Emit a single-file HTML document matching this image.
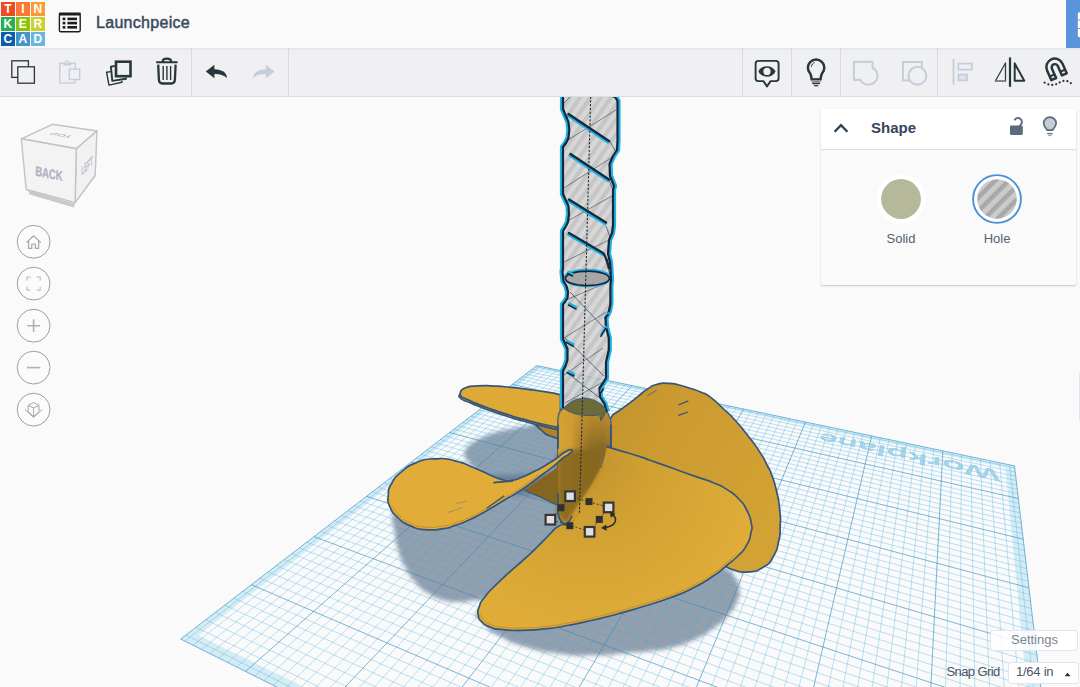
<!DOCTYPE html>
<html><head><meta charset="utf-8"><title>Launchpeice</title>
<style>
html,body{margin:0;padding:0;}
body{width:1080px;height:687px;overflow:hidden;background:#fafafa;font-family:"Liberation Sans",sans-serif;position:relative;color:#3b4a5e}
#topbar{position:absolute;left:0;top:0;width:1080px;height:48px;background:#fafafa}
#toolbar{position:absolute;left:0;top:48px;width:1080px;height:48px;background:#f0f0f3;border-bottom:1px solid #d9dee6;box-sizing:content-box;
 background-image:linear-gradient(#dde1e9 0,#eceef2 2px,#f0f0f3 4px)}
.sep{position:absolute;top:48px;width:1px;height:48px;background:#d5dae3}
#title{position:absolute;left:96px;top:13.5px;font-size:16px;font-weight:normal;color:#3b4a5e;-webkit-text-stroke:0.5px #3b4a5e;letter-spacing:0.3px}
.logo{position:absolute;left:1px;top:2px;width:44px;height:44px}
.logo div{position:absolute;width:13.7px;height:13.7px;color:#fff;font-weight:bold;font-size:12px;line-height:14.4px;text-align:center}
#bluebtn{position:absolute;left:1066px;top:0;width:14px;height:48px;background:#5b94da}
.ib{position:absolute}
#panel{position:absolute;left:821px;top:109px;width:255px;height:176px;background:#fafafa;box-shadow:0 1px 2px rgba(80,100,130,.35);border-radius:2px}
#panel .hd{position:absolute;left:0;top:0;width:255px;height:40px;background:#fff;border-bottom:1px solid #d9dee6}
#panel .ttl{position:absolute;left:50px;top:10px;font-size:15px;font-weight:bold;color:#35455a}
.lbl{position:absolute;font-size:13px;color:#566173;text-align:center;width:60px}
#settings{position:absolute;left:990px;top:630px;width:88px;height:21px;background:rgba(255,255,255,.85);border:1px solid #e2e5ea;border-radius:3px;font-size:13px;color:#7b8492;line-height:20px;box-sizing:border-box}
#settings span{position:absolute;left:20px;top:-1px}
#snap{position:absolute;left:946.5px;top:664px;font-size:13px;color:#4a5567;letter-spacing:-0.6px}
#snapbox{position:absolute;left:1008px;top:662px;width:70.5px;height:21.5px;background:#fff;border:1px solid #e2e5ea;border-radius:3px;box-sizing:border-box;font-size:13px;color:#4a5567}
#snapbox span{position:absolute;left:7px;top:1px;letter-spacing:-0.25px}
</style></head>
<body>
<svg id="scene" width="1080" height="687" viewBox="0 0 1080 687" style="position:absolute;left:0;top:0">
<defs><filter id="bl" x="-20%" y="-20%" width="140%" height="140%"><feGaussianBlur stdDeviation="2.1"/></filter><filter id="bl1" x="-20%" y="-20%" width="140%" height="140%"><feGaussianBlur stdDeviation="1.2"/></filter><filter id="bl2" x="-20%" y="-20%" width="140%" height="140%"><feGaussianBlur stdDeviation="4"/></filter><pattern id="st" width="8.4" height="8.4" patternUnits="userSpaceOnUse" patternTransform="rotate(-55)"><rect width="8.4" height="8.4" fill="#cfcfcf"/><rect width="8.4" height="4" fill="#b9b9b9"/></pattern><linearGradient id="hubg" x1="0" x2="1" y1="0" y2="0"><stop offset="0" stop-color="#dba535"/><stop offset="0.25" stop-color="#d09b31"/><stop offset="0.45" stop-color="#a57d29"/><stop offset="0.62" stop-color="#8f6e26"/><stop offset="0.85" stop-color="#8a6a25"/><stop offset="1" stop-color="#9a7628"/></linearGradient><linearGradient id="hubl" x1="0" x2="1" y1="0" y2="0"><stop offset="0" stop-color="#80611f"/><stop offset="0.35" stop-color="#8d6b23"/><stop offset="0.7" stop-color="#8a6924"/><stop offset="1" stop-color="#a17b2a"/></linearGradient><linearGradient id="hubt" gradientUnits="userSpaceOnUse" x1="0" x2="0" y1="398" y2="446"><stop offset="0" stop-color="#d6a235" stop-opacity="0.75"/><stop offset="0.5" stop-color="#cf9c33" stop-opacity="0.5"/><stop offset="1" stop-color="#cf9c33" stop-opacity="0"/></linearGradient><linearGradient id="hubv" x1="0" x2="0" y1="0" y2="1"><stop offset="0" stop-color="#8a6922" stop-opacity="0"/><stop offset="1" stop-color="#8a6922" stop-opacity="1"/></linearGradient><linearGradient id="b3g" x1="0" x2="1" y1="0" y2="0.6"><stop offset="0" stop-color="#c2932e"/><stop offset="0.35" stop-color="#cb9b31"/><stop offset="1" stop-color="#d3a234"/></linearGradient><radialGradient id="b4g" gradientUnits="userSpaceOnUse" cx="590" cy="465" r="170"><stop offset="0" stop-color="#c2942e"/><stop offset="0.3" stop-color="#cf9f32"/><stop offset="0.7" stop-color="#d8a736"/><stop offset="1" stop-color="#dfac38"/></radialGradient></defs><polygon points="180.7,639.0 536.8,365.6 1014.5,465.9 1088.9,1093.1" fill="#ffffff" fill-opacity="0.12"/>
<path d="M180.7,639.0 L536.8,365.6 L1014.5,465.9 L1088.9,1093.1Z M198.4,635.3 L539.4,369.0 L1005.4,467.8 L1062.7,1058.6Z" fill="#bfe3f0" fill-opacity="0.62" fill-rule="evenodd"/>
<g filter="url(#bl)">
<path d="M464.5,456.0 C464.3,452.7 463.4,453.5 466.2,449.0 C469.0,444.5 467.4,446.5 473.0,442.6 C478.6,438.7 475.2,440.7 483.0,437.2 C490.8,433.7 486.9,434.9 496.5,432.2 C506.1,429.5 502.2,430.9 511.7,429.0 C521.2,427.1 513.9,427.9 525.0,426.6 C536.1,425.3 530.0,421.9 545.0,425.0 C560.0,428.1 560.0,421.0 570.0,436.0 C580.0,451.0 578.3,452.0 575.0,470.0 C571.7,488.0 575.0,481.7 560.0,490.0 C545.0,498.3 550.0,495.0 530.0,495.0 C510.0,495.0 516.1,496.7 500.0,490.0 C483.9,483.3 491.1,483.0 481.7,475.0 C472.3,467.0 476.7,471.3 471.7,466.0 C466.7,460.7 469.1,462.3 466.7,459.0 C464.3,455.7 464.7,459.3 464.5,456.0Z" fill="#5b6b83" fill-opacity="0.64"/>
<path d="M393.0,512.0 C391.3,524.8 393.2,520.6 395.0,533.3 C396.8,546.0 395.0,538.9 398.3,550.0 C401.6,561.1 399.4,556.1 405.0,566.7 C410.6,577.3 407.2,572.8 415.0,581.7 C422.8,590.6 418.9,587.2 428.3,593.3 C437.7,599.4 433.3,597.2 443.3,600.0 C453.3,602.8 448.3,601.5 458.3,601.7 C468.3,601.9 465.1,601.6 473.3,600.5 C481.5,599.4 474.1,602.0 483.0,598.5 C491.9,595.0 481.0,606.2 500.0,590.0 C519.0,573.8 516.7,576.7 540.0,550.0 C563.3,523.3 563.3,533.3 570.0,510.0 C576.7,486.7 583.3,491.7 560.0,480.0 C536.7,468.3 543.3,475.0 500.0,475.0 C456.7,475.0 463.3,473.3 430.0,480.0 C396.7,486.7 412.3,484.3 400.0,495.0 C387.7,505.7 394.7,499.2 393.0,512.0Z" fill="#5b6b83" fill-opacity="0.64"/>
<path d="M481.0,610.0 C469.3,616.5 478.1,615.5 485.0,624.5 C491.9,633.5 487.8,629.5 501.7,637.0 C515.6,644.5 507.3,641.4 526.7,647.0 C546.1,652.6 537.8,650.9 560.0,653.7 C582.2,656.5 571.1,655.5 593.3,655.3 C615.5,655.1 607.8,654.4 626.7,653.0 C645.6,651.6 635.6,652.7 650.0,651.0 C664.4,649.3 655.6,651.7 670.0,648.0 C684.4,644.3 678.9,646.5 693.3,640.0 C707.7,633.5 701.6,636.8 713.3,628.5 C725.0,620.2 720.4,624.0 728.3,615.0 C736.2,606.0 733.4,610.4 737.0,601.5 C740.6,592.6 740.0,596.5 739.2,588.3 C738.4,580.1 738.9,583.4 734.5,577.0 C730.1,570.6 737.5,574.7 726.0,569.0 C714.5,563.3 742.0,553.0 700.0,560.0 C658.0,567.0 660.0,575.0 600.0,590.0 C540.0,605.0 559.7,598.3 520.0,605.0 C480.3,611.7 492.7,603.5 481.0,610.0Z" fill="#5b6b83" fill-opacity="0.64"/>
</g>
<path d="M184.7,641.1 L539.6,366.2 M185.8,635.1 L1087.5,1081.1 M193.1,645.2 L545.5,367.4 M195.9,627.3 L1084.7,1057.6 M201.5,649.5 L551.4,368.6 M205.7,619.8 L1082.0,1035.2 M210.1,653.7 L557.3,369.9 M215.3,612.4 L1079.5,1013.8 M218.7,658.1 L563.3,371.1 M224.7,605.2 L1077.0,993.2 M227.5,662.5 L569.3,372.4 M233.8,598.2 L1074.7,973.5 M236.5,666.9 L575.4,373.7 M242.7,591.4 L1072.4,954.6 M254.7,676.1 L587.7,376.2 M259.8,578.2 L1068.2,919.0 M264.0,680.7 L593.9,377.6 M268.1,571.9 L1066.2,902.2 M273.5,685.4 L600.2,378.9 M276.2,565.7 L1064.3,886.0 M283.1,690.2 L606.5,380.2 M284.1,559.6 L1062.5,870.5 M292.8,695.1 L612.8,381.5 M291.8,553.7 L1060.7,855.5 M302.7,700.1 L619.2,382.9 M299.4,547.9 L1059.0,841.0 M312.8,705.1 L625.7,384.2 M306.8,542.2 L1057.3,827.0 M333.3,715.3 L638.8,387.0 M321.0,531.2 L1054.2,800.5 M343.8,720.6 L645.4,388.4 M327.9,525.9 L1052.7,787.9 M354.5,725.9 L652.0,389.8 M334.7,520.7 L1051.2,775.7 M365.3,731.4 L658.8,391.2 M341.3,515.6 L1049.8,763.9 M376.3,736.9 L665.5,392.6 M347.8,510.7 L1048.5,752.4 M387.5,742.5 L672.4,394.0 M354.2,505.8 L1047.1,741.4 M398.9,748.1 L679.3,395.5 M360.4,501.0 L1045.9,730.6 M422.2,759.8 L693.2,398.4 M372.4,491.7 L1043.4,710.1 M434.2,765.8 L700.3,399.9 M378.3,487.3 L1042.3,700.3 M446.3,771.8 L707.4,401.4 M384.0,482.8 L1041.1,690.7 M458.6,778.0 L714.5,402.9 M389.7,478.5 L1040.0,681.5 M471.2,784.3 L721.8,404.4 M395.2,474.3 L1039.0,672.5 M484.0,790.7 L729.1,405.9 M400.6,470.1 L1037.9,663.7 M497.0,797.2 L736.4,407.5 M405.9,466.1 L1036.9,655.2 M523.6,810.5 L751.3,410.6 M416.2,458.1 L1035.0,638.8 M537.3,817.3 L758.9,412.2 M421.2,454.3 L1034.1,631.0 M551.3,824.3 L766.5,413.8 M426.2,450.5 L1033.1,623.3 M565.4,831.4 L774.2,415.4 M431.0,446.8 L1032.3,615.9 M579.9,838.6 L781.9,417.0 M435.8,443.1 L1031.4,608.6 M594.6,846.0 L789.7,418.7 M440.4,439.5 L1030.6,601.5 M609.6,853.5 L797.6,420.3 M445.0,436.0 L1029.7,594.6 M640.4,868.9 L813.5,423.7 M454.0,429.1 L1028.2,581.2 M656.2,876.8 L821.6,425.4 M458.3,425.8 L1027.4,574.8 M672.4,884.9 L829.8,427.1 M462.6,422.5 L1026.6,568.5 M688.9,893.1 L838.0,428.8 M466.8,419.3 L1025.9,562.4 M705.6,901.5 L846.3,430.6 M471.0,416.1 L1025.2,556.4 M722.8,910.1 L854.7,432.3 M475.0,413.0 L1024.5,550.5 M740.2,918.8 L863.1,434.1 M479.0,409.9 L1023.8,544.8 M776.2,936.8 L880.3,437.7 M486.9,403.9 L1022.5,533.7 M794.8,946.1 L889.0,439.5 M490.7,400.9 L1021.9,528.4 M813.7,955.6 L897.7,441.4 M494.4,398.1 L1021.3,523.1 M833.1,965.2 L906.6,443.2 M498.1,395.2 L1020.6,518.0 M852.9,975.1 L915.5,445.1 M501.8,392.4 L1020.0,512.9 M873.0,985.2 L924.5,447.0 M505.3,389.7 L1019.5,508.0 M893.7,995.5 L933.6,448.9 M508.9,387.0 L1018.9,503.2 M936.3,1016.8 L952.1,452.8 M515.8,381.7 L1017.8,493.8 M958.3,1027.8 L961.4,454.7 M519.1,379.1 L1017.2,489.3 M980.9,1039.1 L970.9,456.7 M522.4,376.6 L1016.7,484.8 M1003.9,1050.6 L980.4,458.7 M525.7,374.0 L1016.2,480.5 M1027.5,1062.4 L990.0,460.7 M528.9,371.6 L1015.7,476.2 M1051.7,1074.5 L999.7,462.8 M532.1,369.1 L1015.2,472.0 M1076.4,1086.9 L1009.6,464.8 M535.2,366.7 L1014.7,467.9" stroke="#38abdf" stroke-opacity="0.42" stroke-width="0.8" fill="none"/>
<path d="M245.5,671.5 L581.5,375.0 M251.4,584.7 L1070.3,936.4 M322.9,710.2 L632.2,385.6 M314.0,536.6 L1055.7,813.5 M410.5,753.9 L686.2,396.9 M366.5,496.3 L1044.6,720.2 M510.2,803.8 L743.8,409.0 M411.1,462.0 L1035.9,646.9 M624.8,861.1 L805.5,422.0 M449.5,432.5 L1028.9,587.8 M758.1,927.7 L871.7,435.9 M483.0,406.9 L1023.2,539.2 M914.7,1006.1 L942.8,450.8 M512.3,384.3 L1018.3,498.5 M180.7,639.0 L536.8,365.6 M180.7,639.0 L1088.9,1093.1 M1088.9,1093.1 L1014.5,465.9 M536.8,365.6 L1014.5,465.9" stroke="#2b8cc4" stroke-opacity="0.62" stroke-width="1" fill="none"/>
<path d="M534.4,424 L558.5,429.8 L558.5,439 L546,434.4Z" fill="#b0832a" stroke="#35567a" stroke-width="1.7" stroke-linejoin="round"/>
<path d="M460.0,393.9 C460.3,395.5 456.9,395.4 461.0,398.6 C465.1,401.8 462.9,399.7 472.2,403.6 C481.5,407.5 477.8,406.1 488.9,410.2 C500.0,414.3 494.5,412.3 505.6,415.8 C516.7,419.3 511.1,417.7 522.2,420.8 C533.3,423.9 527.4,422.4 538.9,425.2 C550.4,428.0 549.5,427.6 556.7,429.2 C563.9,430.8 559.2,429.7 560.5,430.0 L560.5,400Z" fill="#c5962f" stroke="#35567a" stroke-width="1.7" stroke-linejoin="round"/>
<path d="M460.0,393.9 C461.5,392.0 458.5,391.0 464.4,388.3 C470.3,385.6 467.8,386.6 477.8,385.9 C487.8,385.2 483.3,385.6 494.4,386.1 C505.5,386.6 500.0,386.3 511.1,387.4 C522.2,388.5 516.7,388.0 527.8,389.4 C538.9,390.8 534.0,390.0 544.4,391.7 C554.8,393.4 553.5,393.0 558.9,394.4 C564.3,395.8 560.0,395.5 560.5,396.0 L560.5,428.0 C559.2,427.7 563.9,428.8 556.7,427.2 C549.5,425.6 550.4,426.1 538.9,423.3 C527.4,420.5 533.3,422.0 522.2,418.9 C511.1,415.8 516.7,417.4 505.6,413.9 C494.5,410.4 500.0,412.4 488.9,408.3 C477.8,404.2 481.5,405.6 472.2,401.7 C462.9,397.8 464.8,398.4 461.1,396.7Z" fill="#dfa936" stroke="#35567a" stroke-width="1.7" stroke-linejoin="round"/>
<path d="M606.0,430.0 C607.7,425.8 607.3,423.5 611.2,417.4 C615.1,411.3 612.3,416.0 617.8,411.7 C623.3,407.4 621.1,409.4 627.8,404.4 C634.5,399.4 631.1,401.9 637.8,396.7 C644.5,391.5 641.5,393.0 647.8,388.9 C654.1,384.8 650.0,386.4 656.7,384.5 C663.4,382.6 660.4,383.1 667.8,383.3 C675.2,383.5 671.5,383.3 678.9,385.0 C686.3,386.7 682.6,385.9 690.0,388.3 C697.4,390.7 694.4,389.3 701.1,392.2 C707.8,395.1 702.9,391.6 710.0,396.9 C717.1,402.2 714.0,400.0 722.5,408.0 C731.0,416.0 726.8,411.2 735.5,420.8 C744.2,430.4 740.5,426.2 748.7,436.7 C756.9,447.2 753.7,442.6 760.0,452.4 C766.3,462.2 763.6,458.5 767.5,466.0 C771.4,473.5 768.6,466.4 771.7,475.0 C774.8,483.6 774.0,480.0 776.7,491.7 C779.4,503.4 778.5,498.6 779.7,510.0 C780.9,521.4 780.6,515.5 780.2,526.0 C779.8,536.5 781.0,531.2 778.6,541.5 C776.2,551.8 778.2,548.4 773.0,557.0 C767.8,565.6 771.3,562.3 763.0,567.3 C754.7,572.3 757.9,571.0 748.2,571.9 C738.5,572.8 741.8,572.0 734.0,570.0 C726.2,568.0 727.9,567.3 724.9,566.0 L700,540 L640,470 L606,447Z" fill="url(#b3g)" stroke="#35567a" stroke-width="1.7" stroke-linejoin="round"/>
<path d="M558,470 L558,421 C558.3,414 560,410.5 562.5,409.4 C566,404.6 572,400.3 577.3,398.8 C581,397.8 586,397.8 590.4,398.8 C596,400.3 601,403.8 602.6,406.2 C606,410 609.5,416 610.5,420.4 C611,424 611,427 611,430 L610.8,470 Z" fill="url(#hubg)" stroke="#35567a" stroke-width="1.7" stroke-linejoin="round"/>
<path d="M558,470 L558,421 C558.3,414 560,410.5 562.5,409.4 C566,404.6 572,400.3 577.3,398.8 C581,397.8 586,397.8 590.4,398.8 C596,400.3 601,403.8 602.6,406.2 C606,410 609.5,416 610.5,420.4 C611,424 611,427 611,430 L610.8,470 Z" fill="url(#hubt)"/>
<path d="M606.7,446.7 C611.1,448.0 608.9,447.3 620.0,450.6 C631.1,453.9 630.0,453.4 640.0,456.6 C650.0,459.8 638.9,456.2 650.0,460.2 C661.1,464.2 657.7,462.9 673.3,468.5 C688.9,474.1 683.4,472.2 696.7,476.9 C710.0,481.6 703.3,478.5 713.3,482.7 C723.3,486.9 718.4,484.1 726.7,489.4 C735.0,494.7 731.6,491.6 738.3,498.5 C745.0,505.4 742.4,501.7 746.7,510.0 C751.0,518.3 749.9,515.5 751.3,523.3 C752.7,531.1 752.3,526.1 750.8,533.3 C749.3,540.5 750.9,537.6 746.7,545.0 C742.5,552.4 745.0,548.7 738.3,555.5 C731.6,562.3 735.0,558.7 726.7,565.5 C718.4,572.3 724.5,568.5 713.3,576.0 C702.1,583.5 708.1,580.5 693.0,588.0 C677.9,595.5 685.7,592.0 668.0,598.5 C650.3,605.0 657.1,602.3 640.0,607.5 C622.9,612.7 632.3,610.0 616.7,614.2 C601.1,618.4 608.9,616.4 593.3,620.0 C577.7,623.6 585.5,622.1 570.0,625.0 C554.5,627.9 562.3,626.9 546.7,628.7 C531.1,630.5 537.8,630.0 523.3,630.3 C508.8,630.6 514.4,630.8 503.3,629.7 C492.2,628.6 497.2,629.7 490.0,627.0 C482.8,624.3 485.6,625.7 481.7,621.7 C477.8,617.7 479.1,620.0 478.3,615.0 C477.5,610.0 477.0,612.8 479.2,606.7 C481.4,600.6 479.2,604.2 485.0,596.7 C490.8,589.2 488.4,592.5 496.7,584.2 C505.0,575.9 501.1,579.8 510.0,571.7 C518.9,563.6 514.4,568.1 523.3,560.0 C532.2,551.9 528.1,555.8 536.7,547.5 C545.3,539.2 541.9,542.0 549.0,535.0 C556.1,528.0 552.3,530.0 558.0,526.5 C563.7,523.0 563.3,525.2 566.0,524.6 L606.7,446.7Z" fill="url(#b4g)"/>
<path d="M558.0,444.0 L558.0,513.0 L559.5,519.0 L562.5,523.0 L566.0,524.6 L569.5,521.0 L572.5,515.0 L580.5,502.1 L590.1,487.7 L599.7,470.0 L604.6,455.6 L607.0,447.0 L610.8,444.0 Z" fill="url(#hubg)"/>
<path d="M557.0,455.0 L566.0,451.0 L580.0,449.0 L596.0,449.0 L606.0,450.0 L603.5,457.0 L598.5,470.5 L589.0,488.0 L579.5,502.5 L571.8,516.0 L566.0,524.6 L557.0,514.0" fill="#86661f" fill-opacity="0.9" filter="url(#bl)"/>
<path d="M604.6,455.6 L599.7,470 L590.1,487.7 L580.5,502.1 L572.5,515 L569.5,521 L575,521 L612,447Z" fill="#c8992f" filter="url(#bl1)"/>
<path d="M480.6,613.0 C481.6,615.2 480.0,615.7 483.5,619.6 C487.0,623.5 484.3,622.0 491.0,624.6 C497.7,627.2 492.7,626.2 503.5,627.3 C514.3,628.4 509.0,628.2 523.3,627.9 C537.6,627.6 531.1,628.0 546.5,626.3 C561.9,624.6 554.2,625.6 569.6,622.7 C585.0,619.8 577.3,621.3 592.8,617.7 C608.3,614.1 600.5,616.0 616.0,611.9 C631.5,607.8 622.2,610.5 639.2,605.3 C656.2,600.1 649.5,602.8 667.0,596.4 C684.5,590.0 676.8,593.4 691.8,586.0 C706.8,578.6 700.8,581.6 712.0,574.2 C723.2,566.8 717.1,570.7 725.4,563.8 C733.7,556.9 733.1,557.0 737.0,553.6" fill="none" stroke="#b98b2d" stroke-width="1" stroke-opacity="0.85"/>
<path d="M606.7,446.7 C611.1,448.0 608.9,447.3 620.0,450.6 C631.1,453.9 630.0,453.4 640.0,456.6 C650.0,459.8 638.9,456.2 650.0,460.2 C661.1,464.2 657.7,462.9 673.3,468.5 C688.9,474.1 683.4,472.2 696.7,476.9 C710.0,481.6 703.3,478.5 713.3,482.7 C723.3,486.9 718.4,484.1 726.7,489.4 C735.0,494.7 731.6,491.6 738.3,498.5 C745.0,505.4 742.4,501.7 746.7,510.0 C751.0,518.3 749.9,515.5 751.3,523.3 C752.7,531.1 752.3,526.1 750.8,533.3 C749.3,540.5 750.9,537.6 746.7,545.0 C742.5,552.4 745.0,548.7 738.3,555.5 C731.6,562.3 735.0,558.7 726.7,565.5 C718.4,572.3 724.5,568.5 713.3,576.0 C702.1,583.5 708.1,580.5 693.0,588.0 C677.9,595.5 685.7,592.0 668.0,598.5 C650.3,605.0 657.1,602.3 640.0,607.5 C622.9,612.7 632.3,610.0 616.7,614.2 C601.1,618.4 608.9,616.4 593.3,620.0 C577.7,623.6 585.5,622.1 570.0,625.0 C554.5,627.9 562.3,626.9 546.7,628.7 C531.1,630.5 537.8,630.0 523.3,630.3 C508.8,630.6 514.4,630.8 503.3,629.7 C492.2,628.6 497.2,629.7 490.0,627.0 C482.8,624.3 485.6,625.7 481.7,621.7 C477.8,617.7 479.1,620.0 478.3,615.0 C477.5,610.0 477.0,612.8 479.2,606.7 C481.4,600.6 479.2,604.2 485.0,596.7 C490.8,589.2 488.4,592.5 496.7,584.2 C505.0,575.9 501.1,579.8 510.0,571.7 C518.9,563.6 514.4,568.1 523.3,560.0 C532.2,551.9 528.1,555.8 536.7,547.5 C545.3,539.2 541.9,542.0 549.0,535.0 C556.1,528.0 552.3,530.0 558.0,526.5 C563.7,523.0 563.3,525.2 566.0,524.6" fill="none" stroke="#35567a" stroke-width="1.7" stroke-linejoin="round"/>
<path d="M524.4,490 L558,467 L559,506 Z" fill="#86661f"/>
<path d="M524.4,490 L558,505.3" fill="none" stroke="#35567a" stroke-width="1.2"/>
<path d="M558,425 L558,449 M558,493 L558,513 C559,519 562,523.5 566,524.6 C569,522 571,519 572,516" fill="none" stroke="#35567a" stroke-width="1.7" stroke-linejoin="round"/>
<path d="M610.8,425 L610.8,446.5 L606.5,446.6" fill="none" stroke="#35567a" stroke-width="1.7" stroke-linejoin="round"/>
<path d="M604.8,454 L600.6,468" fill="none" stroke="#35567a" stroke-width="1" stroke-opacity="0.8"/>
<path d="M388.3,495.0 C388.9,487.1 387.2,491.1 391.7,483.3 C396.2,475.5 393.4,478.6 401.7,471.7 C410.0,464.8 405.6,466.8 416.7,462.5 C427.8,458.2 422.2,459.4 435.0,458.8 C447.8,458.2 442.2,457.9 455.0,460.8 C467.8,463.7 461.6,462.8 473.3,467.5 C485.0,472.2 480.0,470.8 490.0,475.0 C500.0,479.2 496.0,478.2 503.3,480.0 C510.6,481.8 505.6,481.4 512.0,480.4 C518.4,479.4 515.1,479.9 522.4,477.0 C529.7,474.1 526.2,475.5 534.0,471.6 C541.8,467.7 537.9,469.8 545.7,465.2 C553.5,460.6 550.5,462.4 557.3,457.8 C564.1,453.2 561.0,454.0 566.0,451.5 C571.0,449.0 571.2,449.4 572.2,450.2 C573.2,451.0 572.0,451.4 569.0,454.0 C566.0,456.6 568.9,453.4 563.1,458.0 C557.3,462.6 559.3,461.6 551.5,467.8 C543.7,474.0 549.5,469.4 539.8,476.5 C530.1,483.6 534.0,481.4 522.4,489.2 C510.8,497.0 516.5,492.8 504.9,499.8 C493.3,506.8 499.1,503.6 487.5,510.2 C475.9,516.8 480.8,514.5 470.0,519.6 C459.2,524.7 463.9,522.4 455.0,525.4 C446.1,528.4 453.3,527.2 443.3,528.6 C433.3,530.0 436.1,530.6 425.0,529.6 C413.9,528.6 418.9,529.5 410.0,525.6 C401.1,521.7 405.0,524.2 398.3,518.0 C391.6,511.8 393.3,514.7 390.0,507.0 C386.7,499.3 387.7,502.9 388.3,495.0Z" fill="#e1ac38" stroke="#35567a" stroke-width="1.7" stroke-linejoin="round"/>
<path d="M392.0,505.5 C394.5,508.9 393.3,509.8 399.5,515.6 C405.7,521.4 402.1,519.2 410.6,523.0 C419.1,526.8 414.2,526.0 425.0,527.0 C435.8,528.0 433.0,527.4 443.0,526.0 C453.0,524.6 446.0,525.8 455.0,522.8 C464.0,519.8 459.3,522.0 470.0,517.0 C480.7,512.0 475.6,514.3 487.0,507.8 C498.4,501.3 492.7,504.5 504.2,497.6 C515.7,490.7 510.0,494.9 521.5,487.2 C533.0,479.5 533.0,478.8 538.8,474.6" fill="none" stroke="#b88a2c" stroke-width="0.9" stroke-opacity="0.9"/>
<path d="M493.3,482.8 C500,482 506,481.5 513,480.8" fill="none" stroke="#35567a" stroke-width="1.7" stroke-linejoin="round"/>
<path d="M486.7,508.3 L504.2,495.8" fill="none" stroke="#35567a" stroke-width="1.4"/>
<path d="M456,503.6 L467,501 M447.5,512.6 L462.5,507.6" fill="none" stroke="#8c8468" stroke-width="0.7"/>
<path d="M678.3,405 L688.3,400.8 M678.3,415.3 L688,412" fill="none" stroke="#35567a" stroke-width="1.3"/>
<path d="M647.5,395.8 L656.7,390" fill="none" stroke="#35567a" stroke-width="0.7"/>
<clipPath id="sho"><path d="M0,96H1080V687H0Z M563.0,96.0 L563.0,109.0 L565.5,115.0 L568.5,122.0 L569.3,130.0 L568.5,138.0 L566.0,143.0 L563.0,147.0 L563.0,194.0 L565.5,199.5 L568.5,206.0 L569.0,214.0 L568.0,222.0 L565.5,227.0 L563.0,231.0 L563.0,268.0 L562.5,272.0 L563.5,281.0 L566.5,286.0 L568.0,292.0 L567.5,298.0 L565.0,302.0 L563.0,304.5 L563.0,339.0 L565.0,343.0 L567.5,349.0 L567.5,360.0 L565.5,366.0 L563.0,371.0 L563.0,408.6 L606.8,412.0 L604.5,404.0 L600.0,397.0 L599.5,388.0 L603.0,383.0 L606.0,378.0 L606.0,362.0 L608.8,350.0 L608.8,338.0 L606.0,327.0 L605.5,318.0 L609.0,311.0 L610.4,304.0 L610.4,285.0 L611.0,280.0 L610.5,270.0 L610.0,262.0 L608.0,254.0 L609.0,240.0 L612.0,233.0 L613.0,226.0 L613.0,190.0 L614.0,186.0 L610.0,176.0 L609.5,164.0 L613.0,156.0 L617.0,150.0 L617.5,140.0 L617.5,101.0 L615.0,97.0 L612.0,96.0Z" clip-rule="evenodd"/></clipPath>
<clipPath id="shi"><path d="M563.0,96.0 L563.0,109.0 L565.5,115.0 L568.5,122.0 L569.3,130.0 L568.5,138.0 L566.0,143.0 L563.0,147.0 L563.0,194.0 L565.5,199.5 L568.5,206.0 L569.0,214.0 L568.0,222.0 L565.5,227.0 L563.0,231.0 L563.0,268.0 L562.5,272.0 L563.5,281.0 L566.5,286.0 L568.0,292.0 L567.5,298.0 L565.0,302.0 L563.0,304.5 L563.0,339.0 L565.0,343.0 L567.5,349.0 L567.5,360.0 L565.5,366.0 L563.0,371.0 L563.0,408.6 L606.8,412.0 L604.5,404.0 L600.0,397.0 L599.5,388.0 L603.0,383.0 L606.0,378.0 L606.0,362.0 L608.8,350.0 L608.8,338.0 L606.0,327.0 L605.5,318.0 L609.0,311.0 L610.4,304.0 L610.4,285.0 L611.0,280.0 L610.5,270.0 L610.0,262.0 L608.0,254.0 L609.0,240.0 L612.0,233.0 L613.0,226.0 L613.0,190.0 L614.0,186.0 L610.0,176.0 L609.5,164.0 L613.0,156.0 L617.0,150.0 L617.5,140.0 L617.5,101.0 L615.0,97.0 L612.0,96.0Z"/></clipPath>
<path d="M563.0,96.0 L563.0,109.0 L565.5,115.0 L568.5,122.0 L569.3,130.0 L568.5,138.0 L566.0,143.0 L563.0,147.0 L563.0,194.0 L565.5,199.5 L568.5,206.0 L569.0,214.0 L568.0,222.0 L565.5,227.0 L563.0,231.0 L563.0,268.0 L562.5,272.0 L563.5,281.0 L566.5,286.0 L568.0,292.0 L567.5,298.0 L565.0,302.0 L563.0,304.5 L563.0,339.0 L565.0,343.0 L567.5,349.0 L567.5,360.0 L565.5,366.0 L563.0,371.0 L563.0,408.6 L606.8,412.0 L604.5,404.0 L600.0,397.0 L599.5,388.0 L603.0,383.0 L606.0,378.0 L606.0,362.0 L608.8,350.0 L608.8,338.0 L606.0,327.0 L605.5,318.0 L609.0,311.0 L610.4,304.0 L610.4,285.0 L611.0,280.0 L610.5,270.0 L610.0,262.0 L608.0,254.0 L609.0,240.0 L612.0,233.0 L613.0,226.0 L613.0,190.0 L614.0,186.0 L610.0,176.0 L609.5,164.0 L613.0,156.0 L617.0,150.0 L617.5,140.0 L617.5,101.0 L615.0,97.0 L612.0,96.0Z" fill="url(#st)" fill-opacity="0.82"/>
<path d="M564.0,103.0 L571.0,96.0 M568.0,140.0 L616.0,110.0 M564.0,188.0 L611.0,158.0 M566.0,222.0 L612.0,196.0 M564.0,262.0 L609.0,240.0 M566.0,300.0 L606.0,283.0 M564.0,338.0 L606.0,312.0 M564.0,375.0 L603.0,348.0 M565.0,403.0 L603.0,382.0" stroke="#16263a" stroke-width="0.7" fill="none" stroke-opacity="0.7"/>
<path d="M570.0,292.0 L606.0,330.0 M565.0,338.0 L604.0,376.0 M566.0,372.0 L600.0,398.0 M609.0,140.0 L616.0,152.0 M609.0,180.0 L613.0,190.0 M606.0,226.0 L611.0,240.0 M605.0,258.0 L610.0,275.0" stroke="#16263a" stroke-width="0.8" fill="none" stroke-opacity="0.75"/>
<ellipse cx="587.4" cy="278" rx="22" ry="7.2" fill="#a2a2a2" fill-opacity="0.9"/>
<path d="M565,277.4 A22.4,7.4 0 0 1 609.8,277.4" fill="none" stroke="#20b2e4" stroke-width="2.6"/>
<path d="M566,279.6 A22.4,7.4 0 0 0 609,279.6" fill="none" stroke="#20b2e4" stroke-width="1.4" transform="translate(0,1.6)" stroke-opacity="0.8"/>
<ellipse cx="587.4" cy="278.4" rx="22" ry="7.2" fill="none" stroke="#16263a" stroke-width="1.7"/>
<g clip-path="url(#sho)"><path d="M563.0,96.0 L563.0,109.0 L565.5,115.0 L568.5,122.0 L569.3,130.0 L568.5,138.0 L566.0,143.0 L563.0,147.0 L563.0,194.0 L565.5,199.5 L568.5,206.0 L569.0,214.0 L568.0,222.0 L565.5,227.0 L563.0,231.0 L563.0,268.0 L562.5,272.0 L563.5,281.0 L566.5,286.0 L568.0,292.0 L567.5,298.0 L565.0,302.0 L563.0,304.5 L563.0,339.0 L565.0,343.0 L567.5,349.0 L567.5,360.0 L565.5,366.0 L563.0,371.0 L563.0,408.6" fill="none" stroke="#20b2e4" stroke-width="6.2" stroke-linejoin="round"/><path d="M606.8,412.0 L604.5,404.0 L600.0,397.0 L599.5,388.0 L603.0,383.0 L606.0,378.0 L606.0,362.0 L608.8,350.0 L608.8,338.0 L606.0,327.0 L605.5,318.0 L609.0,311.0 L610.4,304.0 L610.4,285.0 L611.0,280.0 L610.5,270.0 L610.0,262.0 L608.0,254.0 L609.0,240.0 L612.0,233.0 L613.0,226.0 L613.0,190.0 L614.0,186.0 L610.0,176.0 L609.5,164.0 L613.0,156.0 L617.0,150.0 L617.5,140.0 L617.5,101.0 L615.0,97.0 L612.0,96.0" fill="none" stroke="#20b2e4" stroke-width="6.2" stroke-linejoin="round"/></g>
<path d="M568.5,114.0 L609.0,141.0 M570.5,154.0 L609.0,179.5 M569.0,199.5 L606.0,222.6 M569.0,233.0 L603.0,253.0" stroke="#20b2e4" stroke-width="2.6" fill="none" stroke-linecap="round" transform="translate(-0.9,1.5)" stroke-dasharray="9,1.5,5,1"/>
<path d="M568.5,114.0 L609.0,141.0 M570.5,154.0 L609.0,179.5 M569.0,199.5 L606.0,222.6 M569.0,233.0 L603.0,253.0 M603,253 C606,257 608,262 609,268" stroke="#16263a" stroke-width="2.3" fill="none" stroke-linecap="round"/>
<path d="M563.0,96.0 L563.0,109.0 L565.5,115.0 L568.5,122.0 L569.3,130.0 L568.5,138.0 L566.0,143.0 L563.0,147.0 L563.0,194.0 L565.5,199.5 L568.5,206.0 L569.0,214.0 L568.0,222.0 L565.5,227.0 L563.0,231.0 L563.0,268.0 L562.5,272.0 L563.5,281.0 L566.5,286.0 L568.0,292.0 L567.5,298.0 L565.0,302.0 L563.0,304.5 L563.0,339.0 L565.0,343.0 L567.5,349.0 L567.5,360.0 L565.5,366.0 L563.0,371.0 L563.0,408.6 M606.8,412.0 L604.5,404.0 L600.0,397.0 L599.5,388.0 L603.0,383.0 L606.0,378.0 L606.0,362.0 L608.8,350.0 L608.8,338.0 L606.0,327.0 L605.5,318.0 L609.0,311.0 L610.4,304.0 L610.4,285.0 L611.0,280.0 L610.5,270.0 L610.0,262.0 L608.0,254.0 L609.0,240.0 L612.0,233.0 L613.0,226.0 L613.0,190.0 L614.0,186.0 L610.0,176.0 L609.5,164.0 L613.0,156.0 L617.0,150.0 L617.5,140.0 L617.5,101.0 L615.0,97.0 L612.0,96.0" fill="none" stroke="#16263a" stroke-width="2.2" stroke-linejoin="round"/>
<path d="M568.0,304.0 L576.5,308.6 M566.0,341.5 L574.0,345.8 M567.0,371.8 L574.5,375.4 M604.5,317.5 L608.5,313.5 M600.5,336.0 L606.0,327.0 M600.0,393.0 L603.5,388.0 M567.0,272.5 L573.0,275.5" stroke="#20b2e4" stroke-width="2.4" fill="none" transform="translate(0.5,-1)"/>
<path d="M568.0,304.0 L576.5,308.6 M566.0,341.5 L574.0,345.8 M567.0,371.8 L574.5,375.4 M604.5,317.5 L608.5,313.5 M600.5,336.0 L606.0,327.0 M600.0,393.0 L603.5,388.0 M567.0,272.5 L573.0,275.5" stroke="#16263a" stroke-width="1.6" fill="none" transform="translate(0,0.8)"/>
<path d="M564.4,407.8 C568,403 575,398.9 583.4,398.2 C592,398.4 600,402 605.5,408.6 L605.5,412.4 C604.2,415 602.6,418 600.9,420.6 C600.6,418 600,416 599.1,414.8 C594,415.9 588,415.7 583.4,415.3 C577,414.7 570,412.6 564.4,409 Z" fill="#6d6a3a" stroke="#35567a" stroke-width="0.9" stroke-linejoin="round"/>
<path d="M590.7,96.5 L579.4,514" stroke="#1d2b33" stroke-width="1.1" stroke-dasharray="2.2,1.6" fill="none"/>
<path d="M570,496 L589,502 L608.3,507 L599.5,519.3 L590,531.7 L569.5,525 L550,520 L560.7,508.3Z" fill="none" stroke="#333" stroke-width="0.9" stroke-dasharray="2,2"/>
<rect x="585.5" y="498.1" width="7" height="7" fill="#303030"/>
<rect x="557.5" y="504.2" width="7" height="7" fill="#303030"/>
<rect x="595.8" y="515.9" width="7" height="7" fill="#303030"/>
<rect x="566.3" y="522.2" width="7" height="7" fill="#303030"/>
<rect x="565.3" y="491.4" width="9.6" height="9.6" fill="#dfdfdf" stroke="#363636" stroke-width="2.2"/>
<rect x="603.8" y="502.6" width="9.6" height="9.6" fill="#dfdfdf" stroke="#363636" stroke-width="2.2"/>
<rect x="545.6" y="514.9" width="9.6" height="9.6" fill="#dfdfdf" stroke="#363636" stroke-width="2.2"/>
<rect x="584.8" y="527.0" width="9.6" height="9.6" fill="#dfdfdf" stroke="#363636" stroke-width="2.2"/>
<path d="M612.5,514.6 C617.8,518.6 616.8,526.2 603.5,527.7" fill="none" stroke="#2b2b2b" stroke-width="1.5"/>
<path d="M610,511.8 L615.6,514 L610.8,517.8Z M601,527.9 L606.2,524.4 L606.8,530.8Z" fill="#2b2b2b"/>
</svg>
<div style="position:absolute;left:0;top:0;width:600px;height:100px;font-size:100px;line-height:100px;font-weight:bold;color:#8fc9e3;opacity:0.75;white-space:nowrap;transform-origin:0 0;transform:matrix3d(-0.201239,0.007599,0,0.00019721, 0.368170,0.014406,0,0.00038205, 0,0,1,0, 1001.0338,484.5855,0,1.000000)">Workplane</div><div id="topbar"><div class="logo"><div style="left:0.0px;top:0.0px;background:#f04a23">T</div><div style="left:15.0px;top:0.0px;background:#fa7935">I</div><div style="left:30.0px;top:0.0px;background:#fc9a38">N</div><div style="left:0.0px;top:15.0px;background:#2bae4f">K</div><div style="left:15.0px;top:15.0px;background:#8bc40f">E</div><div style="left:30.0px;top:15.0px;background:#c9d12c">R</div><div style="left:0.0px;top:30.0px;background:#0a5eab">C</div><div style="left:15.0px;top:30.0px;background:#4594cd">A</div><div style="left:30.0px;top:30.0px;background:#69b6df">D</div></div><div id="title">Launchpeice</div><div id="bluebtn"></div></div>
<div id="toolbar"></div>
<div class="sep" style="left:191.3px"></div><div class="sep" style="left:288.2px"></div>
<div class="sep" style="left:742px"></div><div class="sep" style="left:791px"></div><div class="sep" style="left:840px"></div><div class="sep" style="left:937px"></div>
<svg width="1080" height="97" viewBox="0 0 1080 97" style="position:absolute;left:0;top:0" fill="none">
<rect x="59.4" y="14" width="20.8" height="17.8" rx="1.6" stroke="#1d1d1d" stroke-width="1.4"/>
<rect x="58.8" y="12.6" width="22" height="3" rx="1" fill="#1d1d1d"/>
<rect x="62.6" y="17.6" width="2.8" height="2.6" fill="#1d1d1d"/><rect x="67.4" y="17.6" width="9.6" height="2.6" fill="#1d1d1d"/>
<rect x="62.6" y="21.8" width="2.8" height="2.6" fill="#1d1d1d"/><rect x="67.4" y="21.8" width="9.6" height="2.6" fill="#1d1d1d"/>
<rect x="62.6" y="26.0" width="2.8" height="2.6" fill="#1d1d1d"/><rect x="67.4" y="26.0" width="9.6" height="2.6" fill="#1d1d1d"/>
<rect x="11.8" y="60.8" width="16.6" height="16.6" stroke="#27373b" stroke-width="1.3"/>
<rect x="17.8" y="66.8" width="16.6" height="16.4" fill="#f0f0f3" stroke="#27373b" stroke-width="1.3"/>
<rect x="59.8" y="63.2" width="15.4" height="19.8" stroke="#c4cfdb" stroke-width="1.4"/>
<path d="M63.4,65.5 V63 H65.5 V61.7 Q65.5,60.4 66.8,60.4 H68 Q69.3,60.4 69.3,61.7 V63 H71.4 V65.5Z" fill="#c4cfdb"/><circle cx="67.4" cy="62.5" r="0.95" fill="#f0f0f3"/>
<rect x="69.3" y="69.1" width="10.4" height="10.4" fill="#f0f0f3" stroke="#c4cfdb" stroke-width="1.4"/>
<path d="M110.9,71.6 L106.6,72.3 L109,85.1 L122,82.2 L121.8,80.8" stroke="#27373b" stroke-width="1.4" stroke-linejoin="round"/>
<path d="M114.8,66 L110.9,66.6 L112.3,80.9 L126,78.8 L126,77.4" stroke="#27373b" stroke-width="1.9" stroke-linejoin="round"/>
<rect x="116" y="61.7" width="14.5" height="14.5" fill="#f0f0f3" stroke="#27373b" stroke-width="2.6"/>
<path d="M156.2,62.2 H177.6 M162.6,61.8 C162.6,57.6 171.2,57.6 171.2,61.8" stroke="#27373b" stroke-width="2.1"/>
<path d="M158.2,64.6 L158.9,79.8 C159,82.4 160.4,83.5 162.4,83.5 H171.4 C173.4,83.5 174.8,82.4 174.9,79.8 L175.6,64.6" stroke="#27373b" stroke-width="2.3"/>
<path d="M163.2,66 V80 M166.9,66 V80 M170.6,66 V80" stroke="#27373b" stroke-width="1.4"/>
<path d="M205.8,71.6 L214.4,64.8 V69.2 C222,69.4 226.8,72.4 227,78 C223.6,75 219.6,73.8 214.4,74 V78.2Z" fill="#27373b"/>
<path d="M274.6,71.4 L265.8,64.8 V69.2 C258.2,69.4 253.4,72.4 253.2,78 C256.6,75 260.6,73.8 265.8,74 V78.2Z" fill="#c4cfdb"/>
<path d="M758.4,60.9 H775.8 Q778.6,60.9 778.6,63.7 V78.3 Q778.6,81.1 775.8,81.1 H770.6 L767,86.4 L763.4,81.1 H758.4 Q755.6,81.1 755.6,78.3 V63.7 Q755.6,60.9 758.4,60.9Z" stroke="#27373b" stroke-width="1.9" stroke-linejoin="round"/>
<path d="M758.4,71.4 C762,64.4 772,64.4 775.6,71.4 C772,78.4 762,78.4 758.4,71.4Z" fill="#27373b"/>
<circle cx="767" cy="71.4" r="3.6" fill="#f0f0f3"/>
<path d="M811.5,78.6 C811.4,76.2 810.9,74.9 810.1,73.3 A8.2,8.2 0 1 1 822.1,73.3 C821.3,74.9 820.8,76.2 820.7,78.6" stroke="#27373b" stroke-width="2.5"/>
<path d="M810.4,79.3 H821.8" stroke="#27373b" stroke-width="2.3"/><path d="M811.4,81.4 H820.8" stroke="#8a9598" stroke-width="1.9"/><path d="M812.3,83.4 H819.9" stroke="#27373b" stroke-width="1.6"/><path d="M814,85.7 H818.2" stroke="#27373b" stroke-width="1.2"/>
<path d="M811.4,66.6 C811.7,64.4 813,63 814.6,62.5" stroke="#27373b" stroke-width="1"/>
<path d="M853.9,61.9 H872.6 V67.7 A9,9 0 1 1 860.5,79.9 H853.9Z" stroke="#c4cfdb" stroke-width="2.1" stroke-linejoin="round"/>
<rect x="903" y="62" width="18.8" height="18.4" stroke="#c4cfdb" stroke-width="2"/>
<circle cx="917.4" cy="75.7" r="8.9" fill="#f0f0f3" stroke="#c4cfdb" stroke-width="2.1"/>
<path d="M953.5,59 V84.7" stroke="#c4cfdb" stroke-width="1.8"/>
<rect x="958.4" y="63.6" width="13.4" height="6" stroke="#c4cfdb" stroke-width="1.8"/>
<rect x="958.4" y="74.4" width="8.6" height="6" fill="#dde2e9" stroke="#c4cfdb" stroke-width="1.8"/>
<path d="M1010,57.4 V86.8" stroke="#27373b" stroke-width="2.2"/>
<path d="M1005.5,63 V81 H995.4Z" stroke="#2f3f43" stroke-width="1.3" stroke-linejoin="round"/><path d="M995.4,81 H1005.5" stroke="#8a9598" stroke-width="1.5"/>
<path d="M1014.7,63.4 V80.7 H1024.3Z" stroke="#27373b" stroke-width="2" stroke-linejoin="round"/>
<g transform="translate(1055.3,68.3) rotate(-24)"><path d="M-8.4,9.2 V-1.4 A8.4,8.4 0 0 1 8.4,-1.4 V9.2 H3.2 V-1 A3.2,3.2 0 0 0 -3.2,-1 V9.2Z" stroke="#27373b" stroke-width="2.5" stroke-linejoin="round"/><path d="M-8.4,5.2 H-3.2 M3.2,5.2 H8.4" stroke="#27373b" stroke-width="2"/></g>
<path d="M1044.6,82.6 C1051,86.6 1056,84.8 1060,82.2 C1064,79.8 1068,80.4 1071.6,83.8" stroke="#27373b" stroke-width="2.2" stroke-dasharray="0.1,3.9" stroke-linecap="round"/>
<rect x="1077.8" y="12.2" width="10" height="25" rx="1.6" fill="#fff"/>
<path d="M1077,20.1 H1080 M1077,28.4 H1080" stroke="#5b94da" stroke-width="1"/>
</svg><svg width="130" height="340" viewBox="0 100 130 340" style="position:absolute;left:0;top:100px" fill="none" font-family="Liberation Sans, sans-serif">
<path d="M28,190.5 L75,203.4 L73.8,207.4 L29.6,194.6Z" fill="#c9c9cb"/>
<path d="M21.3,138.8 L52.4,124.3 L96.9,131 L76.3,148.8Z" fill="#f6f6f7" stroke="#c2c2c6" stroke-width="1.4" stroke-linejoin="round"/>
<path d="M76.3,148.8 L96.9,131 L95.2,175.5 L75.1,202.6Z" fill="#f1f1f2" stroke="#c2c2c6" stroke-width="1.4" stroke-linejoin="round"/>
<path d="M21.3,138.8 L76.3,148.8 L75.1,202.6 L26.2,189.5Z" fill="#f3f3f4" stroke="#c2c2c6" stroke-width="1.4" stroke-linejoin="round"/>
<text transform="matrix(0.97,0.19,-0.04,1,35.2,175.6)" font-size="13.5" font-weight="bold" fill="#adb2c1" stroke="#adb2c1" stroke-width="0.3" textLength="28" lengthAdjust="spacingAndGlyphs">BACK</text>
<text transform="matrix(-0.93,-0.168,0.55,-0.26,73.6,136)" font-size="11" font-weight="bold" fill="#b4b8c5">TOP</text>
<text transform="matrix(0.34,-0.32,0.02,0.95,81.4,175.5)" font-size="13.5" font-weight="bold" fill="#b4b8c5">LEFT</text>
<circle cx="33.6" cy="241.8" r="16.4" fill="#fbfbfb" stroke="#9d9da9" stroke-width="1"/>
<circle cx="33.6" cy="283.6" r="16.4" fill="#fbfbfb" stroke="#9d9da9" stroke-width="1"/>
<circle cx="33.6" cy="325.7" r="16.4" fill="#fbfbfb" stroke="#9d9da9" stroke-width="1"/>
<circle cx="33.6" cy="367.6" r="16.4" fill="#fbfbfb" stroke="#9d9da9" stroke-width="1"/>
<circle cx="33.6" cy="409.6" r="16.4" fill="#fbfbfb" stroke="#9d9da9" stroke-width="1"/>
<path d="M26.4,242.6 L33.6,235.8 L40.8,242.6 M28.6,241 V248.4 H31.8 V244 H35.4 V248.4 H38.6 V241" stroke="#a6a6ae" stroke-width="1.2" stroke-linejoin="round"/>
<path d="M27,280.6 V277.2 H30.4 M36.8,277.2 H40.2 V280.6 M40.2,286.8 V290.2 H36.8 M30.4,290.2 H27 V286.8" stroke="#c3c3c9" stroke-width="1.3"/>
<path d="M27.2,325.7 H40 M33.6,319.3 V332.1" stroke="#b0b0b7" stroke-width="1.6"/>
<path d="M27,367.6 H40.2" stroke="#b0b0b7" stroke-width="1.6"/>
<path d="M33.6,402.6 L39,405.4 V411.6 L33.6,416.6 L28.2,411.6 V405.4Z M28.2,405.4 L33.6,408 L39,405.4 M33.6,408 V416.6 M25,409.6 L33.6,417.4 L42.2,409.6" stroke="#a6a6ae" stroke-width="1" stroke-linejoin="round"/>
</svg><div id="panel"><div class="hd"></div><div class="ttl">Shape</div>
<div class="lbl" style="left:50px;top:122px">Solid</div><div class="lbl" style="left:146px;top:122px">Hole</div>
<svg width="255" height="176" style="position:absolute;left:0;top:0" viewBox="821 109 255 176" fill="none">
<defs><pattern id="hs" width="9.6" height="9.6" patternUnits="userSpaceOnUse" patternTransform="rotate(-45 997 199)"><rect width="9.6" height="9.6" fill="#cbcbcb"/><rect y="0" width="9.6" height="4.6" fill="#a9a9a9"/></pattern>
<clipPath id="hc"><circle cx="997" cy="199" r="19.8"/></clipPath></defs>
<path d="M834.6,131.8 L841,125.2 L847.4,131.8" stroke="#2c3e50" stroke-width="2.3"/>
<rect x="1010" y="125.6" width="12.8" height="9.3" rx="1.3" fill="#5a6b80"/>
<path d="M1014.4,120.4 A3.9,3.9 0 1 1 1020.6,124.8 L1019.6,126" stroke="#5a6b80" stroke-width="1.9"/>
<path d="M1047,130.2 C1046.8,128.4 1043.7,126.8 1043.7,123.3 A6.2,6.2 0 0 1 1056.1,123.3 C1056.1,126.8 1053,128.4 1052.8,130.2 Z" fill="#c6cbd5" stroke="#5a6b80" stroke-width="1.7" stroke-linejoin="round"/>
<path d="M1047.2,133.6 H1052.6" stroke="#5a6b80" stroke-width="1.3"/><path d="M1048.2,135.5 H1051.8" stroke="#9aa5b3" stroke-width="1.2"/>
<circle cx="901" cy="199" r="24.6" fill="#fff"/><circle cx="901" cy="199" r="19.9" fill="#b5b899"/>
<circle cx="997" cy="199" r="23.9" fill="#fff" stroke="#4a8fd9" stroke-width="1.9"/>
<g clip-path="url(#hc)"><rect x="975" y="177" width="44" height="44" fill="url(#hs)"/></g>
</svg></div>
<div style="position:absolute;left:1078.6px;top:373px;width:2px;height:47px;background:#e1e4eb"></div>
<div id="settings"><span>Settings</span></div>
<div id="snap">Snap Grid</div><div id="snapbox"><span>1/64 in</span><svg width="8" height="5" viewBox="0 0 8 5" style="position:absolute;left:54.5px;top:9.2px"><path d="M0.6,4.2 L3.6,0.8 L6.6,4.2Z" fill="#2c2c2c"/></svg></div>
</body></html>
